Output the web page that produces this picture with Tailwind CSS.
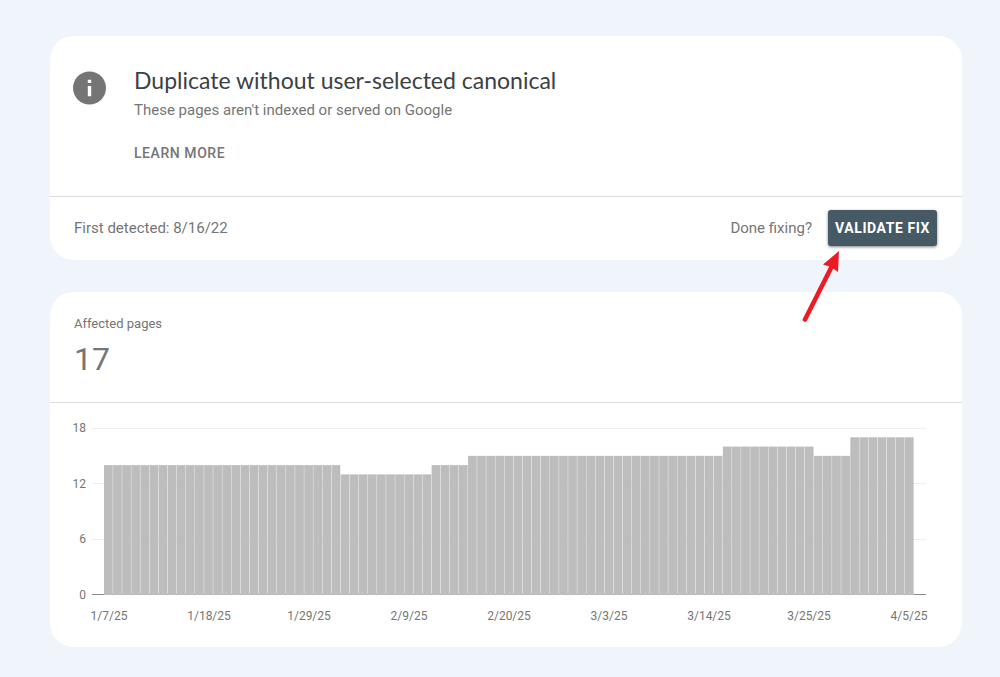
<!DOCTYPE html>
<html lang="en">
<head>
<meta charset="utf-8">
<meta name="viewport" content="width=device-width, initial-scale=1">
<title>Duplicate without user-selected canonical</title>
<script src="https://cdn.jsdelivr.net/npm/@tailwindcss/browser@4"></script>
</head>
<body class="min-h-screen bg-[#f0f4fb] font-[Roboto,sans-serif] text-[#757575]">
<main class="flex flex-col gap-8 pt-9 pb-[30px] pl-[50px] pr-[38px]">

  <section class="rounded-3xl bg-white">
    <div class="flex gap-7 border-b border-[#dadce0] pr-6 pl-[23px] pt-[30px] pb-[33px]">
      <svg class="mt-[5px] -ml-px h-[34px] w-[34px] shrink-0" viewBox="0 0 34 34" aria-hidden="true">
        <circle cx="17.5" cy="17" r="16.5" fill="#757575"/>
        <path d="M15.8 8.7h3.4v3.3h-3.4zM15.8 15h3.4v10.3h-3.4z" fill="#fff"/>
      </svg>
      <div class="flex flex-col items-start">
        <h1 class="font-['Google_Sans',Lato,sans-serif] text-[23px] leading-7 text-[#3c4043]">Duplicate without user-selected canonical</h1>
        <p class="mt-1.5 text-[15px] leading-5">These pages aren't indexed or served on Google</p>
        <a href="#" class="mt-[23px] text-sm leading-5 font-medium tracking-[0.04em]">LEARN MORE</a>
      </div>
    </div>
    <div class="flex items-center justify-between pt-[13px] pb-[14px] pl-6 pr-[25px]">
      <p class="text-[15px] leading-5">First detected: 8/16/22</p>
      <div class="relative flex items-center gap-4">
        <span class="text-[15px] leading-5">Done fixing?</span>
        <button type="button" class="h-9 w-[109px] rounded-[3px] bg-[#455a64] text-sm font-bold tracking-[0.04em] whitespace-nowrap text-white shadow-[0_1px_3px_rgba(0,0,0,0.5)]">VALIDATE FIX</button>
        <svg class="absolute top-[40px] right-[96px] h-[72px] w-10" viewBox="0 0 40 72" aria-hidden="true">
          <path d="M4 69.500 30 18" stroke="#ed1c24" stroke-width="4.6" stroke-linecap="round"/>
          <path d="M38 1 22 14.500 28 16.500 33.500 19.500 37 22z" fill="#ed1c24"/>
        </svg>
      </div>
    </div>
  </section>

  <section class="rounded-3xl bg-white">
    <div class="border-b border-[#dadce0] px-6 pt-6 pb-6">
      <h2 class="text-[13px] leading-4">Affected pages</h2>
      <p class="mt-2 text-[32px] leading-[38px]">17</p>
    </div>
    <div class="pt-[17px] pb-[23px] text-xs leading-4">
      <div class="flex gap-1.5 pr-9">
        <div class="flex w-9 flex-col justify-between text-right">
          <span>18</span><span>12</span><span>6</span><span>0</span>
        </div>
        <div class="relative my-2 h-[167px] flex-1 px-3">
          <div class="absolute inset-0 flex flex-col justify-between">
            <div class="h-px bg-[#eeeeee]"></div>
            <div class="h-px bg-[#eeeeee]"></div>
            <div class="h-px bg-[#eeeeee]"></div>
            <div class="h-px bg-[#8a8a8a]"></div>
          </div>
          <svg id="bars" class="relative h-full w-full" viewBox="0 0 89 18" preserveAspectRatio="none" fill="#bdbdbd" role="img" aria-label="Affected pages per day"></svg>
        </div>
      </div>
      <div class="mt-[5px] flex justify-between pl-[29px] pr-[23px] text-center">
        <span class="w-[60px]">1/7/25</span>
        <span class="w-[60px]">1/18/25</span>
        <span class="w-[60px]">1/29/25</span>
        <span class="w-[60px]">2/9/25</span>
        <span class="w-[60px]">2/20/25</span>
        <span class="w-[60px]">3/3/25</span>
        <span class="w-[60px]">3/14/25</span>
        <span class="w-[60px]">3/25/25</span>
        <span class="w-[60px]">4/5/25</span>
      </div>
    </div>
  </section>
</main>
<script>
  // [pages, number of days]
  const runs = [[14, 26], [13, 10], [14, 4], [15, 28], [16, 10], [15, 4], [17, 7]];
  const days = runs.flatMap(([pages, count]) => Array(count).fill(pages));
  document.getElementById('bars').innerHTML = days.map((pages, i) =>
    `<rect x="${i}" y="${18 - pages}" width="0.96" height="${pages}"/>`).join('');
</script>
</body>
</html>
